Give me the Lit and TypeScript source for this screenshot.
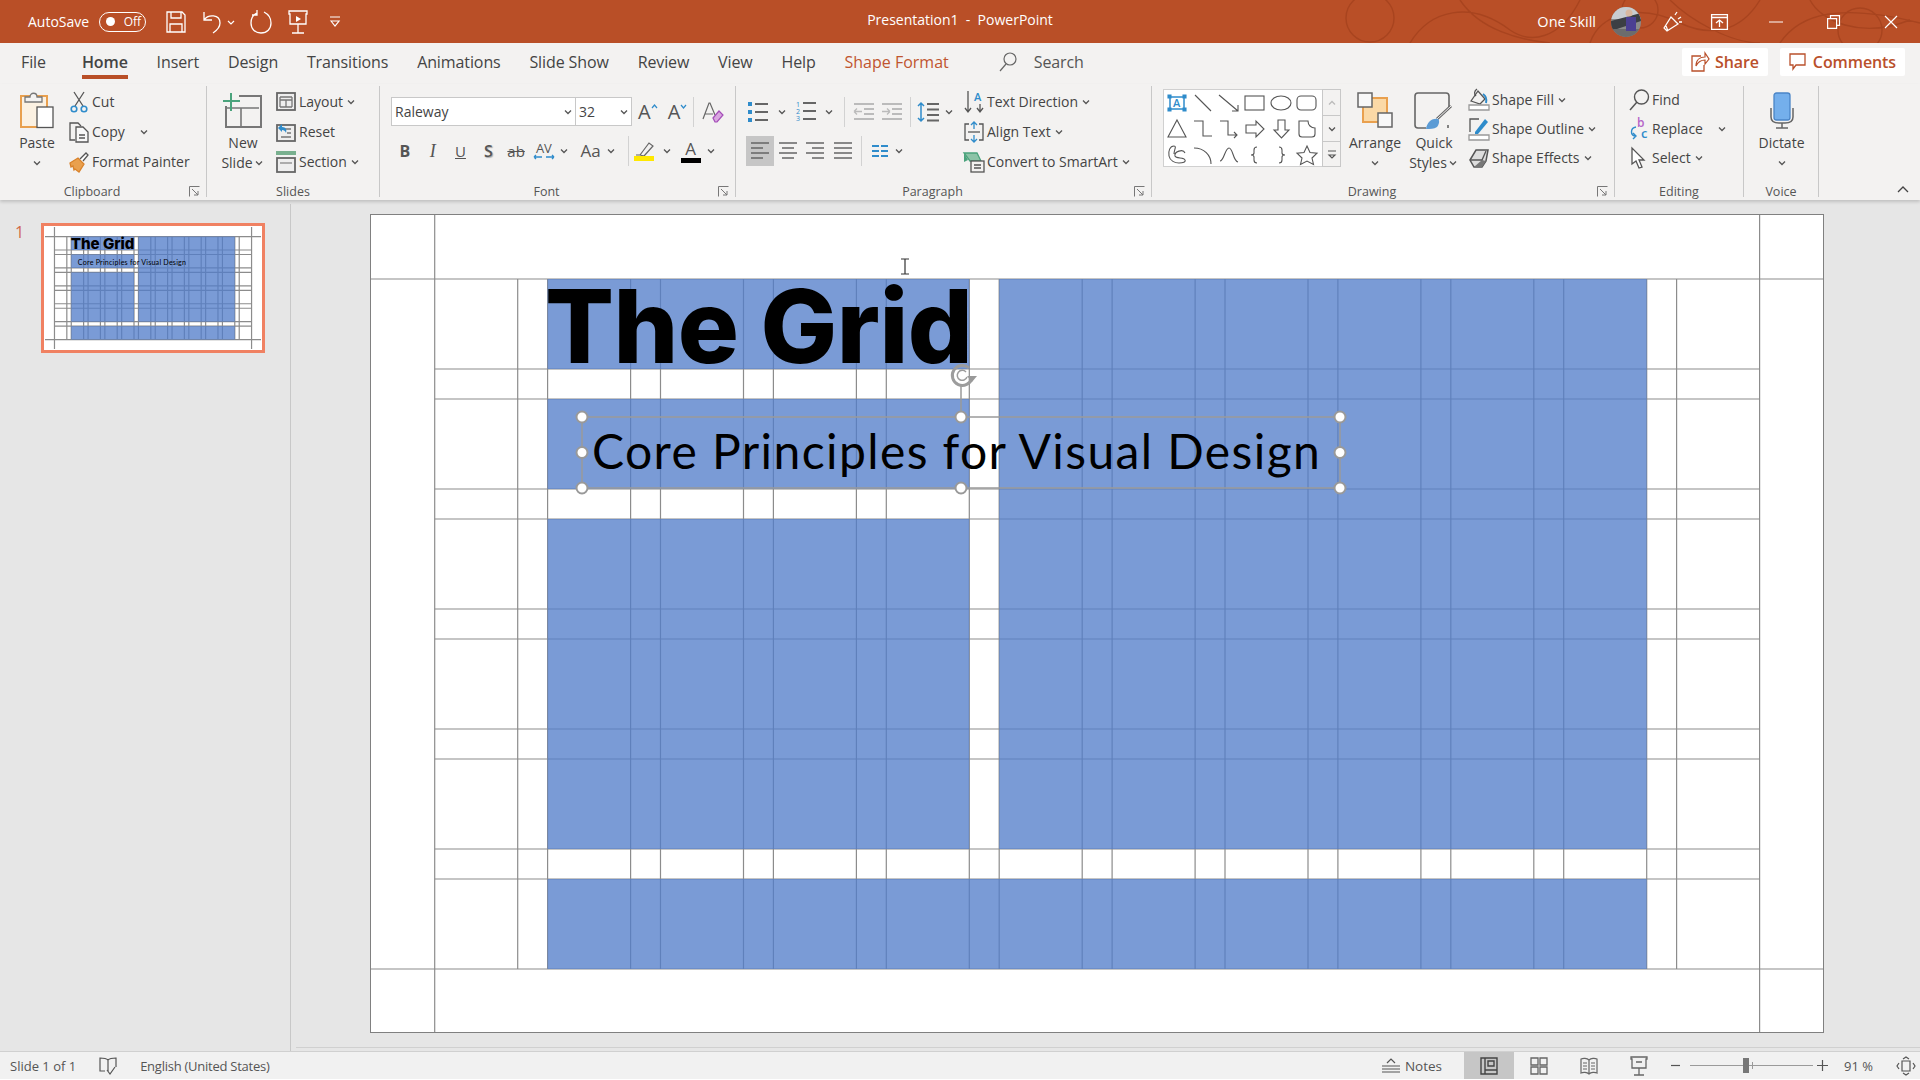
import { LitElement, css, html, svg } from 'lit';
import { customElement } from 'lit/decorators.js';

const BLUE = '#2f8ccb';
const ORANGE = '#e9a04e';
const GREEN = '#4aa37c';
const GREY = '#666';

const ic = (w: number, h: number, body: unknown) =>
  html`<svg class="ic" width=${w} height=${h} viewBox="0 0 ${w} ${h}" fill="none" stroke=${GREY} stroke-width="1.3">${body}</svg>`;

const chev = () =>
  html`<svg class="chev" width="12" height="12" viewBox="0 0 12 12" fill="none" stroke="#555" stroke-width="1.3"><path d="M3 4.5 6 7.5 9 4.5" /></svg>`;

const launcher = () =>
  html`<svg class="launcher" width="11" height="11" viewBox="0 0 11 11" fill="none" stroke="#777"><path d="M.5 10.5V.5H10.5M3 3l6 6M9 5v4H5" /></svg>`;

const icons = {
  paste: ic(34, 36, svg`
    <rect x="1" y="4" width="26" height="31" fill="#fbf1e2" stroke=${ORANGE} stroke-width="2" />
    <path d="M5 10V5h5c0-5 7-5 7 0h5v5z" fill="#f3f2f1" stroke="#777" />
    <rect x="17" y="15" width="16" height="20.5" fill="#fff" stroke="#555" />`),
  cut: ic(20, 22, svg`
    <path d="M5 1 14 15M15 1 6 15" stroke="#555" />
    <circle cx="5" cy="18" r="2.8" stroke=${BLUE} stroke-width="1.6" />
    <circle cx="15" cy="18" r="2.8" stroke=${BLUE} stroke-width="1.6" />`),
  copy: ic(20, 22, svg`
    <path d="M6 19H1V2h8l3 3" stroke="#555" />
    <path d="M7 6h7l5 5v10H7z" fill="#f8f8f8" stroke="#555" />
    <path d="M10 14h6M10 17h6" stroke="#555" />`),
  painter: ic(20, 22, svg`
    <path d="M1 12 9 7l6 6-5 8-4-3-1 1-1-4-2 1z" fill=${ORANGE} stroke="#d9822b" />
    <path d="M11 8l6-6 2 2-5 6" stroke="#555" fill="#fff" />`),
  newSlide: ic(40, 36, svg`
    <path d="M16 4h22v31H3V14" stroke="#777" stroke-width="2" />
    <path d="M3 16h33M18 16v18" stroke="#777" stroke-width="1.6" />
    <path d="M0 9h17M8 1v18" stroke=${GREEN} stroke-width="2" />`),
  layout: ic(20, 20, svg`
    <rect x="1" y="1" width="18" height="17" fill="#eee" stroke="#666" stroke-width="1.8" />
    <path d="M4 5h12M4 5v10M16 5v10M4 15h12M4 8h12M10 8v7" stroke="#777" />`),
  reset: ic(20, 20, svg`
    <rect x="1" y="3" width="18" height="16" fill="#eee" stroke="#666" stroke-width="1.8" />
    <path d="M9 7h6M11 11h4M5 15h10" stroke="#777" />
    <path d="M2 6l4-4v3c4 0 5 3 4 6-.5-2-2-3-4-3v2z" fill=${BLUE} stroke="none" />`),
  section: ic(20, 22, svg`
    <rect x="0" y="0" width="20" height="4" fill="#79b08f" stroke="none" />
    <rect x="1" y="7" width="18" height="14" fill="#eee" stroke="#666" stroke-width="1.8" />
    <path d="M4 12h12" stroke="#888" />`),
  spacing: html`<span class="av">AV<svg width="20" height="6" viewBox="0 0 20 6" fill="none" stroke=${BLUE} stroke-width="1.3"><path d="M0 3h8M0 3l2-2M0 3l2 2M12 3h8M20 3l-2-2M20 3l-2 2" /></svg></span>`,
  bullets: ic(22, 22, svg`
    <path d="M7 3h13M7 11h13M7 19h13" stroke-width="1.8" />
    <rect x="0" y="1" width="4" height="4" fill=${BLUE} stroke="none" />
    <rect x="0" y="9" width="4" height="4" fill=${BLUE} stroke="none" />
    <rect x="0" y="17" width="4" height="4" fill=${BLUE} stroke="none" />`),
  numbers: ic(22, 24, svg`
    <path d="M7 3h13M7 11h13M7 19h13" stroke-width="1.8" />
    <text x="0" y="7" class="nums">1</text><text x="0" y="14" class="nums">2</text><text x="0" y="21" class="nums">3</text>`),
  outdent: ic(22, 20, svg`
    <path d="M1 2h20M11 7h10M11 12h10M1 17h20" stroke="#bbb" stroke-width="1.8" />
    <path d="M9 9.5H1M1 9.5l3-3M1 9.5l3 3" stroke="#bbb" />`),
  indent: ic(22, 20, svg`
    <path d="M1 2h20M11 7h10M11 12h10M1 17h20" stroke="#bbb" stroke-width="1.8" />
    <path d="M1 9.5h8M9 9.5l-3-3M9 9.5l-3 3" stroke="#bbb" />`),
  lineSpacing: ic(22, 22, svg`
    <path d="M9 3h12M9 8.5h12M9 14h12M9 19.5h12" stroke-width="1.8" />
    <path d="M3 2v18M0 5l3-3 3 3M0 17l3 3 3-3" stroke=${BLUE} stroke-width="1.5" />`),
  alignLeft: ic(20, 20, svg`<path d="M1 2h18M1 7h12M1 12h18M1 17h12" stroke-width="1.6" />`),
  alignCenter: ic(20, 20, svg`<path d="M1 2h18M4 7h12M1 12h18M4 17h12" stroke-width="1.6" />`),
  alignRight: ic(20, 20, svg`<path d="M1 2h18M7 7h12M1 12h18M7 17h12" stroke-width="1.6" />`),
  justify: ic(20, 20, svg`<path d="M1 2h18M1 7h18M1 12h18M1 17h18" stroke-width="1.6" />`),
  columns: ic(16, 14, svg`<path d="M0 2h7M9 2h7M0 7h7M9 7h7M0 12h7M9 12h7" stroke=${BLUE} stroke-width="1.8" />`),
  textDir: ic(20, 24, svg`
    <path d="M4 1v21M1 18l3 4 3-4M16 14v8M13 18l3 4 3-4" stroke="#555" />
    <text x="10" y="11" class="blue-a">A</text>`),
  alignText: ic(20, 22, svg`
    <path d="M5 3H1v16h4M15 3h4v16h-4" stroke="#555" />
    <path d="M4 11h12" stroke="#555" />
    <path d="M10 1v7M7 4l3-3 3 3M10 21v-7M7 18l3 3 3-3" stroke=${BLUE} stroke-width="1.3" />`),
  smartArt: ic(22, 22, svg`
    <path d="M1 2h13l4 8H7z" fill="#8cc3a7" stroke=${GREEN} />
    <path d="M1 2l4 7-4 2z" fill=${GREEN} stroke="none" />
    <rect x="8" y="10" width="13" height="11" fill="#f3f2f1" stroke="#555" />
    <path d="M11 14h7M11 17h7" stroke="#555" />`),
  arrange: ic(36, 36, svg`
    <rect x="6" y="6" width="24" height="24" fill="#fbd9a6" stroke=${ORANGE} stroke-width="2" />
    <rect x="1" y="1" width="14" height="14" fill="#f8f8f8" stroke="#666" stroke-width="1.5" />
    <rect x="21" y="21" width="14" height="14" fill="#f8f8f8" stroke="#666" stroke-width="1.5" />`),
  quickStyles: ic(40, 38, svg`
    <path d="M12 36H4a3 3 0 0 1-3-3V4a3 3 0 0 1 3-3h28a3 3 0 0 1 3 3v13M34 33v3" stroke-width="1.6" />
    <path d="M23 27 37 14" stroke="#666" stroke-width="3" />
    <path d="M37 14 23 27" stroke="#f3f2f1" stroke-width="1" />
    <path d="M12 37c1-6 5-11 12-10 2 1 1 6-1 8-3 2-7 2-11 2z" fill="#5b9bd5" stroke="none" />`),
  fill: ic(20, 24, svg`
    <path d="M2 13 9 3l7 8-5 5z" stroke="#555" />
    <path d="M8 1c-3 2-3 5-1 7" stroke="#555" />
    <path d="M14 6c3 2 4 5 3 9" stroke=${BLUE} stroke-width="2" />
    <path d="M0 17h20v5H0z" stroke="#999" fill="#fff" />`),
  outline: ic(20, 24, svg`
    <path d="M1 15V2h9" stroke="#555" />
    <path d="M6 15 16 2l3 3L9 17H6z" fill=${BLUE} stroke="none" />
    <path d="M0 18h20v5H0z" stroke="#999" fill="#fff" />`),
  effects: ic(20, 22, svg`
    <path d="M1 13 7 3h12l-2 11-4 6H5z" fill="#ddd" stroke="#555" stroke-width="1.5" />
    <path d="M1 13h12l4-9M13 13v7" stroke="#555" stroke-width="1.3" />
    <path d="M13 13l4 1-4 6H5z" fill="#777" stroke="none" />`),
  find: ic(20, 22, svg`
    <circle cx="12.5" cy="8" r="7" stroke="#555" stroke-width="1.4" />
    <path d="M8 13 1 21" stroke="#555" stroke-width="1.5" />`),
  replace: ic(20, 24, svg`
    <text x="8" y="10" class="pink-b">b</text>
    <text x="12" y="21" class="blue-c">c</text>
    <path d="M7 10c-6 1-6 9 0 9M4 16l3 3-3 3" stroke=${BLUE} stroke-width="1.4" />`),
  select: ic(20, 22, svg`<path d="M3 1v16l4-3 3 7 3-1-3-7h5z" stroke="#555" stroke-width="1.3" fill="#fff" />`),
  dictate: ic(26, 38, svg`
    <rect x="5" y="1" width="16" height="27" rx="2.5" fill="#74afec" stroke="#4a85c7" />
    <path d="M2 16v9c0 5 4 6 8 6h6c4 0 8-1 8-6v-9" stroke="#666" stroke-width="1.5" />
    <path d="M13 31v5M7 36h12" stroke="#666" stroke-width="1.5" />`),
  share: ic(18, 20, svg`
    <path d="M10 4H1v15h12v-6" stroke="#b9502b" stroke-width="1.3" />
    <path d="M5 14c0-6 4-9 9-9V1l4 6-4 5V8c-4 0-7 2-9 6z" fill="#fff" stroke="#b9502b" stroke-width="1.2" />`),
  comment: ic(18, 18, svg`<path d="M1 1h15v11H7l-3 4v-4H1z" stroke="#b9502b" stroke-width="1.3" />`),
};

const shapes = [
  svg`<rect x="3" y="4" width="14" height="12" stroke=${BLUE} stroke-width="1.5" /><path d="M1 2h3v3H1zM16 2h3v3h-3zM1 15h3v3H1zM16 15h3v3h-3z" fill=${BLUE} stroke=${BLUE} /><text x="6" y="14" class="blue-a">A</text>`,
  svg`<path d="M2 2l16 16" />`,
  svg`<path d="M0 2l19 16M19 12v6h-6" />`,
  svg`<rect x="0" y="3" width="19" height="14" />`,
  svg`<ellipse cx="10" cy="10" rx="10" ry="7" />`,
  svg`<rect x="0" y="3" width="19" height="14" rx="4" />`,
  svg`<path d="M10 1l9 17H1z" />`,
  svg`<path d="M1 2h9v15h9" />`,
  svg`<path d="M1 2h8v14h9M15 13l3 3-3 3" />`,
  svg`<path d="M1 6h10V2l8 8-8 8v-4H1z" />`,
  svg`<path d="M7 1h7v10h4l-7.5 8L3 11h4z" />`,
  svg`<path d="M2 2h9c0 4 3 7 7 7v6q0 3-3 3H5q-3 0-3-3z" />`,
  svg`<path d="M7 9C7 5 10 1 7 1 3 1 1 6 2 11c1 5 6 7 10 7 4 0 7-1 6-3-1-3-9-1-10-4-1-4 8-8 10-3" />`,
  svg`<path d="M1 3c10 0 17 7 17 16" />`,
  svg`<path d="M1 16C5 16 6 3 10 3c4 0 4 13 9 14" />`,
  svg`<path d="M12 2q-3 0-3 3v3q0 2-3 2 3 0 3 2v3q0 3 3 3" />`,
  svg`<path d="M8 2q3 0 3 3v3q0 2 3 2-3 0-3 2v3q0 3-3 3" />`,
  svg`<path d="M10 1l3 6.5 7 .7-5 4.8 1.5 6.5L10 16l-6.5 3.5L5 13 0 8.2l7-.7z" />`,
];

// slide geometry: 12 columns and 6 rows, gutters between them
const SLIDE_W = 1452;
const SLIDE_H = 817;
const COL = 83;
const COL_GAP = 29.9;
const COL_X0 = 63.7;
const ROW = 90;
const ROW_GAP = 30;
const ROW_Y0 = 64;
const colL = (k: number) => COL_X0 + k * (COL + COL_GAP);
const colR = (k: number) => colL(k) + COL;
const rowT = (k: number) => ROW_Y0 + k * (ROW + ROW_GAP);
const rowB = (k: number) => rowT(k) + ROW;

const blocks = [
  [colL(1), rowT(0), colR(4), rowB(0)],
  [colL(1), rowT(1), colR(4), rowB(1)],
  [colL(1), rowT(2), colR(4), rowB(4)],
  [colL(5), rowT(0), colR(10), rowB(4)],
  [colL(1), rowT(5), colR(10), rowB(5)],
];

function slideArt() {
  const xs: number[] = [];
  const ys: number[] = [];
  for (let k = 0; k < 12; k++) xs.push(colL(k), colR(k));
  for (let k = 0; k < 6; k++) ys.push(rowT(k), rowB(k));
  const xEnd = colR(11);
  const yEnd = rowB(5);
  return svg`
    ${xs.map((x, i) =>
      i === 0 || i === xs.length - 1
        ? svg`<line x1=${x} x2=${x} y1="0" y2=${SLIDE_H} class="guide" />`
        : svg`<line x1=${x} x2=${x} y1=${ROW_Y0} y2=${yEnd} class="guide" />`,
    )}
    ${ys.map((y, i) =>
      i === 0 || i === ys.length - 1
        ? svg`<line x1="0" x2=${SLIDE_W} y1=${y} y2=${y} class="guide" />`
        : svg`<line x1=${COL_X0} x2=${xEnd} y1=${y} y2=${y} class="guide" />`,
    )}
    ${blocks.map(
      ([x1, y1, x2, y2]) =>
        svg`<rect x=${x1} y=${y1} width=${x2 - x1} height=${y2 - y1} class="block" />`,
    )}
    <text x="174" y="148" class="slide-title">The Grid</text>
    <text x="221" y="254" class="slide-sub">Core Principles for Visual Design</text>
  `;
}

function selection() {
  const xs = [211, 590, 969];
  const ys = [202, 237.5, 273];
  const pts = xs.flatMap((x, i) =>
    ys.filter((_, j) => !(i === 1 && j === 1)).map((y) => [x, y]),
  );
  return svg`
    <rect x="211" y="202" width="758" height="71" class="sel" />
    <path d="M590 170v32" class="sel" />
    ${pts.map(([x, y]) => svg`<circle cx=${x} cy=${y} r="5.5" class="handle" />`)}
    <path d="M598 153A10 10 0 1 0 601 163" class="rot" />
    <path d="M595 157A5 5 0 1 0 596 162" class="rot thin" />
    <path d="M596 161h10l-5 6z" fill="#999" />
    <path d="M534 44v15M530 44h8M530 59h8" class="beam" />
  `;
}

@customElement('app-root')
export class AppRoot extends LitElement {
  static styles = css`
    :host {
      display: block;
      width: 1920px;
      height: 1080px;
      overflow: hidden;
      background: #fff;
      color: #444;
      font: 14px/20px 'Open Sans', sans-serif;
    }

    svg {
      display: block;
      flex: none;
      overflow: visible;
    }

    .titlebar {
      position: relative;
      display: flex;
      align-items: center;
      height: 43px;
      background: #b94f27;
      color: #fff;
      overflow: hidden;
    }

    .pattern {
      position: absolute;
      top: 0;
      left: 1340px;
    }

    .qat {
      display: flex;
      align-items: center;
      padding-left: 28px;
      width: 760px;
      box-sizing: border-box;
    }

    .toggle {
      display: flex;
      align-items: center;
      justify-content: space-between;
      box-sizing: border-box;
      width: 47px;
      height: 20px;
      margin: 0 20px 0 10px;
      padding: 0 4px 0 6px;
      border: 1px solid #fff;
      border-radius: 10px;
      font-size: 12px;
    }

    .toggle i {
      width: 9px;
      height: 9px;
      border-radius: 50%;
      background: #fff;
    }

    .qat .undo { margin-left: 16px; }
    .qat .undo-chev { margin-left: 4px; }
    .qat .redo { margin-left: 14px; }
    .qat .present { margin-left: 16px; }
    .qat .more { margin-left: 21px; }

    .doc {
      width: 400px;
      text-align: center;
      white-space: pre;
      margin-top: -3px;
      font-size: 14px;
    }

    .win {
      position: relative;
      display: flex;
      align-items: center;
      margin-left: auto;
    }

    .win .user { margin-right: 15px; font-size: 14.5px; }
    .avatar { border-radius: 50%; margin-right: 21px; overflow: hidden; }
    .win .b1 { margin-right: 29px; }
    .win .b2 { margin-right: 41px; }
    .win .b3 { margin-right: 44px; }
    .win .b4 { margin-right: 44px; }
    .win .b5 { margin-right: 22px; }

    .tabs {
      display: flex;
      align-items: center;
      box-sizing: border-box;
      height: 41px;
      padding: 0 0 4px 21px;
      background: #f3f2f1;
      font-size: 16px;
      letter-spacing: -0.1px;
    }

    .tab {
      position: relative;
      margin-right: 28.8px;
      white-space: nowrap;
    }

    .tab.file { margin-right: 36px; }
    .tab.on { font-weight: 600; }

    .tab.on::after {
      content: '';
      position: absolute;
      left: 0;
      right: 0;
      bottom: -7px;
      height: 4px;
      background: #b94f27;
    }

    .tab.ctx {
      color: #c0552f;
      margin-right: 50px;
      letter-spacing: 0;
    }

    .search {
      display: flex;
      align-items: center;
      gap: 17px;
      color: #555;
    }

    .actions {
      display: flex;
      gap: 12px;
      margin-left: auto;
      margin-right: 15px;
    }

    .action {
      display: flex;
      align-items: center;
      gap: 6px;
      height: 28px;
      padding: 0 9px;
      background: #fff;
      color: #b9502b;
      font-weight: 600;
      font-size: 16px;
      border-radius: 2px;
    }

    .ribbon {
      position: relative;
      z-index: 1;
      display: flex;
      box-sizing: border-box;
      height: 116px;
      padding-top: 2px;
      background: #f3f2f1;
      box-shadow: 0 2px 3px rgba(0, 0, 0, 0.16);
    }

    .group {
      position: relative;
      box-sizing: border-box;
      height: 111px;
      border-right: 1px solid #c8c8c8;
      flex: none;
    }

    .body {
      display: flex;
      height: 98px;
      white-space: nowrap;
    }

    .label {
      height: 13px;
      line-height: 16px;
      font-size: 12.5px;
      text-align: center;
      color: #555;
    }

    .label.has-launcher { padding-right: 22px; }

    .launcher {
      position: absolute;
      right: 6px;
      bottom: 0;
    }

    .w-clip { width: 207px; }
    .w-slides { width: 173px; }
    .w-font { width: 356px; }
    .w-para { width: 416px; }
    .w-draw { width: 463px; }
    .w-edit { width: 129px; }
    .w-voice { width: 75px; }

    .big {
      display: flex;
      flex-direction: column;
      align-items: center;
      flex: none;
      box-sizing: border-box;
      padding-top: 6px;
      width: 66px;
    }

    .big .art {
      height: 41px;
      display: flex;
      align-items: flex-start;
      justify-content: center;
    }

    .big span {
      display: flex;
      align-items: center;
      height: 20px;
    }

    .paste { width: 69px; padding-left: 5px; }
    .slide-btn { margin-left: 3px; }
    .quick { width: 52px; }
    .voice { width: 75px; }

    .stack {
      display: flex;
      flex-direction: column;
      padding-top: 1px;
    }

    .stack.tight {
      padding-top: 0;
      margin-top: -1px;
    }

    .stack.pad { padding-left: 14px; }

    .row {
      display: flex;
      align-items: center;
      height: 30px;
    }

    .tight .row { height: 29px; }
    .row .chev { margin-left: 2px; }

    .row .box {
      display: flex;
      justify-content: center;
      width: 20px;
      margin-right: 3px;
    }

    .font-col { padding: 11px 0 0 11px; }

    .font-col.para-left {
      padding-left: 10px;
      width: 206px;
    }

    .combo {
      display: flex;
      align-items: center;
      justify-content: space-between;
      box-sizing: border-box;
      height: 29px;
      padding: 0 1px 0 3px;
      background: #fff;
      border: 1px solid #c8c8c8;
    }

    .combo.name { width: 185px; }
    .combo.size { width: 57px; margin-left: -1px; }

    .tool-row {
      display: flex;
      align-items: center;
      height: 29px;
    }

    .tool-row.second {
      height: 30px;
      margin-top: 10px;
    }

    .cell {
      display: flex;
      align-items: center;
      justify-content: center;
      width: 27.8px;
      height: 30px;
      flex: none;
    }

    .cell.w24 { width: 24px; }
    .cell.w20 { width: 20px; }
    .cell.on { background: #c6c6c6; }

    .vsep {
      width: 1px;
      height: 30px;
      background: #d2d2d2;
      flex: none;
    }

    .m1 { margin-left: 1px; }
    .m2 { margin-left: 2px; }
    .m3 { margin-left: 3px; }
    .m4 { margin-left: 4px; }
    .m5 { margin-left: 5px; }
    .m6 { margin-left: 6px; }
    .m7 { margin-left: 7px; }
    .m8 { margin-left: 8px; }
    .m9 { margin-left: 9px; }
    .m10 { margin-left: 10px; }
    .m11 { margin-left: 11px; }
    .m12 { margin-left: 12px; }

    .fx {
      font-family: 'Open Sans', sans-serif;
      font-size: 15px;
      color: #555;
    }

    .fx.b { font-weight: 700; font-size: 16px; }
    .fx.i { font: italic 18px 'Liberation Serif', serif; }
    .fx.u { text-decoration: underline; }
    .fx.s { font-size: 16px; font-weight: 600; text-shadow: 1px 1px 1px #aaa; }
    .fx.st { text-decoration: line-through; }

    .av {
      display: flex;
      flex-direction: column;
      align-items: center;
      font-size: 13px;
      line-height: 12px;
      color: #555;
    }

    .grow {
      display: flex;
      align-items: flex-start;
      font-size: 20px;
      line-height: 24px;
      color: #555;
    }

    .grow svg { margin-top: 4px; }

    .aa {
      font-size: 17px;
      color: #555;
    }

    .swatch {
      display: flex;
      flex-direction: column;
      align-items: center;
      font-size: 17px;
      line-height: 19px;
      color: #555;
    }

    .swatch i {
      display: block;
      width: 20px;
      height: 5px;
    }

    .swatch i.yellow { background: #ffe800; }
    .swatch i.black { background: #000; }

    .gallery {
      display: flex;
      margin: 3px 0 0 11px;
      height: 78px;
      flex: none;
    }

    .shapes {
      display: grid;
      grid-template-columns: repeat(6, 26px);
      grid-auto-rows: 26px;
      box-sizing: border-box;
      width: 159px;
      background: #fff;
      border: 1px solid #d0d0d0;
      border-right: 0;
    }

    .shapes span {
      display: flex;
      align-items: center;
      justify-content: center;
    }

    .scroller {
      display: grid;
      grid-template-rows: repeat(3, 26px);
      width: 19px;
      box-sizing: border-box;
      border: 1px solid #c8c8c8;
      background: #f3f2f1;
    }

    .scroller span {
      display: flex;
      align-items: center;
      justify-content: center;
      border-bottom: 1px solid #c8c8c8;
    }

    .scroller span:last-child { border-bottom: 0; }

    .collapse {
      position: absolute;
      right: 10px;
      bottom: 6px;
    }

    .main {
      display: flex;
      height: 851px;
      background: #e6e6e6;
    }

    .sidebar {
      display: flex;
      gap: 10px;
      box-sizing: border-box;
      width: 291px;
      margin-top: 4px;
      padding: 19px 0 0 15px;
      border-right: 1px solid #c8c8c8;
      color: #d2694a;
      font-size: 16px;
    }

    .number { margin-top: -1px; }

    .thumb {
      box-sizing: border-box;
      width: 224px;
      height: 130px;
      margin-left: 7px;
      border: 3px solid #f08162;
      background: #fff;
      padding: 1px;
    }

    .editor {
      flex: 1;
      box-sizing: border-box;
      height: 848px;
      margin-left: 5px;
      padding: 15px 0 0 75px;
      border-bottom: 1px solid #d0d0d0;
    }

    .slide {
      background: #fff;
      box-shadow: 0 0 0 1px #808080;
    }

    .guide {
      stroke: #8c8c8c;
      stroke-width: 1.2px;
      vector-effect: non-scaling-stroke;
    }

    .block {
      fill: #527dca;
      fill-opacity: 0.77;
    }

    .slide-title {
      font: 800 102px Inter, sans-serif;
      letter-spacing: -0.5px;
      fill: #000;
    }

    .slide-sub {
      font: 400 48px Lato, sans-serif;
      letter-spacing: 1.4px;
      fill: #000;
    }

    .sel {
      fill: none;
      stroke: #9a9a9a;
      stroke-width: 1.5px;
    }

    .handle {
      fill: #fff;
      stroke: #999;
      stroke-width: 2px;
    }

    .rot {
      fill: none;
      stroke: #9c9c9c;
      stroke-width: 3px;
    }

    .rot.thin { stroke-width: 1.5px; }

    .beam {
      fill: none;
      stroke: #333;
      stroke-width: 1.2px;
    }

    .nums {
      font: 7px 'Open Sans', sans-serif;
      fill: #2f8ccb;
      stroke: none;
    }

    .blue-a {
      font: 600 11px 'Open Sans', sans-serif;
      fill: #2f8ccb;
      stroke: none;
    }

    .pink-b {
      font: 600 12px 'Open Sans', sans-serif;
      fill: #b565c8;
      stroke: none;
    }

    .blue-c {
      font: 600 13px 'Open Sans', sans-serif;
      fill: #2f8ccb;
      stroke: none;
    }

    .status {
      display: flex;
      align-items: center;
      height: 27px;
      padding-left: 10px;
      background: #f1f1f1;
      border-top: 1px solid #d0d0d0;
      font-size: 13px;
      color: #555;
    }

    .status .proof { margin-left: 23px; }

    .status .lang {
      margin-left: 23px;
      letter-spacing: -0.25px;
    }

    .status .view {
      display: flex;
      align-items: center;
      justify-content: center;
      width: 50px;
      height: 27px;
      flex: none;
    }

    .status .view.on { background: #c6c6c6; }

    .status .notes {
      display: flex;
      align-items: center;
      gap: 4px;
      margin-left: auto;
      margin-right: 22px;
      font-size: 13.5px;
    }

    .status .minus { margin-left: 7px; }

    .slider {
      position: relative;
      width: 123px;
      height: 1px;
      margin: 0 4px 0 10px;
      background: #9a9a9a;
    }

    .slider i {
      position: absolute;
      left: 53px;
      top: -7px;
      width: 6px;
      height: 15px;
      background: #777;
    }

    .slider b {
      position: absolute;
      left: 62px;
      top: -3px;
      width: 1px;
      height: 7px;
      background: #999;
    }

    .zoomval {
      width: 52px;
      padding-left: 16px;
      box-sizing: border-box;
      white-space: nowrap;
    }

    .status .fit {
      margin: 0 4px 0 16px;
    }
  `;

  private small(icon: unknown, text: string, after: unknown = chev()) {
    return html`<div class="row"><span class="box">${icon}</span>${text}${after}</div>`;
  }

  render() {
    return html`
      ${this.titlebar()} ${this.tabs()}
      <div class="ribbon">
        ${this.clipboard()} ${this.slides()} ${this.font()} ${this.paragraph()} ${this.drawing()}
        ${this.editing()} ${this.voice()}
        <svg class="collapse" width="14" height="10" viewBox="0 0 14 10" fill="none" stroke="#444" stroke-width="1.3"><path d="M2 8l5-5 5 5" /></svg>
      </div>
      <div class="main">
        <aside class="sidebar">
          <span class="number">1</span>
          <div class="thumb">
            <svg width="216" height="122" viewBox="0 0 ${SLIDE_W} ${SLIDE_H}" preserveAspectRatio="none">${slideArt()}</svg>
          </div>
        </aside>
        <div class="editor">
          <svg class="slide" width=${SLIDE_W} height=${SLIDE_H} viewBox="0 0 ${SLIDE_W} ${SLIDE_H}">
            ${slideArt()} ${selection()}
          </svg>
        </div>
      </div>
      ${this.status()}
    `;
  }

  private titlebar() {
    return html`
      <header class="titlebar">
        <svg class="pattern" width="580" height="43" viewBox="0 0 580 43" fill="none" stroke="#a8441f" stroke-width="1.4">
          <circle cx="30" cy="18" r="24" />
          <path d="M70 43C90 10 130 0 170 30c20 14 50 10 70-30M120 0c20 30 60 40 90 43M250 43c10-30 50-40 90-20 30 14 60 10 80-23M330 0c20 20 60 43 90 43M440 43c20-30 60-40 140-20M470 0c10 20 50 40 100 20" />
          <circle cx="300" cy="10" r="18" />
          <circle cx="520" cy="30" r="22" />
        </svg>
        <div class="qat">
          <span>AutoSave</span>
          <span class="toggle"><i></i>Off</span>
          <svg width="20" height="22" viewBox="0 0 20 22" fill="none" stroke="#fff" stroke-width="1.3"><path d="M1 1h15l3 3v17H1zM5 1v6h10V1M4 21v-8h12v8" /></svg>
          <svg class="undo" width="20" height="24" viewBox="0 0 20 24" fill="none" stroke="#fff" stroke-width="1.3"><path d="M2 2v8h8M2 10c4-6 16-6 16 3 0 5-4 8-7 10" /></svg>
          <svg class="undo-chev" width="10" height="10" viewBox="0 0 10 10" fill="none" stroke="#fff" stroke-width="1.2"><path d="M2 4l3 3 3-3" /></svg>
          <svg class="redo" width="22" height="24" viewBox="0 0 22 24" fill="none" stroke="#fff" stroke-width="1.3"><path d="M7 3C3 5 1 9 1 13c0 6 4 10 10 10s10-4 10-10c0-5-3-9-7-11M7 0v5H2" /></svg>
          <svg class="present" width="20" height="24" viewBox="0 0 20 24" fill="none" stroke="#fff" stroke-width="1.3"><path d="M1 1h18v3h-1v10H2V4H1zM10 14v9M4 23h12" /><path d="M8 6l5 3-5 3z" fill="#fff" stroke="none" /></svg>
          <svg class="more" width="12" height="12" viewBox="0 0 12 12" fill="none" stroke="#fff" stroke-width="1.2"><path d="M1 1h10M2 5l4 5 4-5z" /></svg>
        </div>
        <div class="doc">Presentation1  -  PowerPoint</div>
        <div class="win">
          <span class="user">One Skill</span>
          <svg class="avatar" width="30" height="30" viewBox="0 0 30 30">
            <rect width="30" height="30" fill="#8b8b8b" />
            <rect width="30" height="12" fill="#c9cdd1" />
            <path d="M0 14 30 6v8L0 24z" fill="#3c3f44" />
            <rect y="22" width="30" height="8" fill="#6c6c6c" />
            <rect x="15" y="10" width="10" height="14" fill="#4b3f93" />
            <circle cx="18" cy="6" r="3.5" fill="#d8b8a0" />
          </svg>
          <svg class="b1" width="20" height="24" viewBox="0 0 20 24" fill="none" stroke="#fff" stroke-width="1.3"><path d="M2 18 9 7l7 7-11 7zM4 16l2 5M13 5l2-3M16 9l3-2M17 12h3" /></svg>
          <svg class="b2" width="17" height="16" viewBox="0 0 17 16" fill="none" stroke="#fff" stroke-width="1.3"><path d="M.6.6h15.8v14.8H.6zM.6 3.5h15.8" /><path d="M8.5 13V6M5 9l3.5-3L12 9" /></svg>
          <svg class="b3" width="14" height="2" viewBox="0 0 14 2" stroke="#fff"><path d="M0 1h14" /></svg>
          <svg class="b4" width="13" height="14" viewBox="0 0 13 14" fill="none" stroke="#fff" stroke-width="1.2"><path d="M.6 3.6h9v9.8h-9zM3.5 3.5V.6h9v9.8H9.5" /></svg>
          <svg class="b5" width="14" height="14" viewBox="0 0 14 14" stroke="#fff" stroke-width="1.2"><path d="M1 1l12 12M13 1 1 13" /></svg>
        </div>
      </header>
    `;
  }

  private tabs() {
    const names = ['Insert', 'Design', 'Transitions', 'Animations', 'Slide Show', 'Review', 'View', 'Help'];
    return html`
      <nav class="tabs">
        <span class="tab file">File</span>
        <span class="tab on">Home</span>
        ${names.map((n) => html`<span class="tab">${n}</span>`)}
        <span class="tab ctx">Shape Format</span>
        <span class="search">
          <svg width="18" height="20" viewBox="0 0 18 20" fill="none" stroke="#666" stroke-width="1.2"><circle cx="11" cy="7" r="6" /><path d="M7 12 1 19" /></svg>
          Search
        </span>
        <div class="actions">
          <span class="action">${icons.share} Share</span>
          <span class="action">${icons.comment} Comments</span>
        </div>
      </nav>
    `;
  }

  private clipboard() {
    return html`
      <section class="group w-clip">
        <div class="body">
          <div class="big paste">
            <div class="art">${icons.paste}</div>
            <span>Paste</span>
            <span>${chev()}</span>
          </div>
          <div class="stack">
            ${this.small(icons.cut, 'Cut', '')}
            ${this.small(icons.copy, 'Copy', html`<span class="m11">${chev()}</span>`)}
            ${this.small(icons.painter, 'Format Painter', '')}
          </div>
        </div>
        <div class="label has-launcher">Clipboard</div>
        ${launcher()}
      </section>
    `;
  }

  private slides() {
    return html`
      <section class="group w-slides">
        <div class="body">
          <div class="big slide-btn">
            <div class="art">${icons.newSlide}</div>
            <span>New</span>
            <span>Slide${chev()}</span>
          </div>
          <div class="stack">
            ${this.small(icons.layout, 'Layout')}
            ${this.small(icons.reset, 'Reset', '')}
            ${this.small(icons.section, 'Section')}
          </div>
        </div>
        <div class="label">Slides</div>
      </section>
    `;
  }

  private font() {
    return html`
      <section class="group w-font">
        <div class="body">
          <div class="font-col">
            <div class="tool-row">
              <div class="combo name">Raleway${chev()}</div>
              <div class="combo size">32${chev()}</div>
              <span class="grow m6">A<svg width="7" height="5" viewBox="0 0 7 5" fill="none" stroke=${BLUE} stroke-width="1.2"><path d="M1 4l2.5-3L6 4" /></svg></span>
              <span class="grow m10">A<svg width="7" height="5" viewBox="0 0 7 5" fill="none" stroke=${BLUE} stroke-width="1.2"><path d="M1 1l2.5 3L6 1" /></svg></span>
              <span class="vsep m6"></span>
              <svg class="m8" width="22" height="24" viewBox="0 0 22 24" fill="none" stroke="#666" stroke-width="1.2"><path d="M1 19 7 3h1l5 12M3 14h8" /><path d="M11 18l6-7 4 4-6 7h-2z" fill="#d9a6e0" stroke="#a44db8" /></svg>
            </div>
            <div class="tool-row second">
              <span class="cell"><span class="fx b">B</span></span>
              <span class="cell"><span class="fx i">I</span></span>
              <span class="cell"><span class="fx u">U</span></span>
              <span class="cell"><span class="fx s">S</span></span>
              <span class="cell"><span class="fx st">ab</span></span>
              <span class="cell">${icons.spacing}</span>
              ${chev()}
              <span class="cell m7 aa">Aa</span>
              <span>${chev()}</span>
              <span class="vsep m11"></span>
              <span class="swatch m5"><svg width="20" height="15" viewBox="0 0 20 15" fill="none" stroke="#666" stroke-width="1.2"><path d="M6 14 15 2l4 3-9 10zM2 14h5" /></svg><i class="yellow"></i></span>
              <span class="m7">${chev()}</span>
              <span class="swatch m8">A<i class="black"></i></span>
              <span class="m4">${chev()}</span>
            </div>
          </div>
        </div>
        <div class="label has-launcher">Font</div>
        ${launcher()}
      </section>
    `;
  }

  private paragraph() {
    return html`
      <section class="group w-para">
        <div class="body">
          <div class="font-col para-left">
            <div class="tool-row">
              <span class="cell w24 m1">${icons.bullets}</span>
              <span class="m5">${chev()}</span>
              <span class="cell w24 m7">${icons.numbers}</span>
              <span class="m4">${chev()}</span>
              <span class="vsep m9"></span>
              <span class="cell w24 m7">${icons.outdent}</span>
              <span class="cell w24 m4">${icons.indent}</span>
              <span class="vsep m6"></span>
              <span class="cell w24 m6">${icons.lineSpacing}</span>
              <span class="m2">${chev()}</span>
            </div>
            <div class="tool-row second">
              <span class="cell on">${icons.alignLeft}</span>
              <span class="cell">${icons.alignCenter}</span>
              <span class="cell">${icons.alignRight}</span>
              <span class="cell">${icons.justify}</span>
              <span class="vsep m4"></span>
              <span class="cell w20 m8">${icons.columns}</span>
              <span class="m3">${chev()}</span>
            </div>
          </div>
          <div class="stack m12">
            ${this.small(icons.textDir, 'Text Direction')}
            ${this.small(icons.alignText, 'Align Text')}
            ${this.small(icons.smartArt, 'Convert to SmartArt')}
          </div>
        </div>
        <div class="label has-launcher">Paragraph</div>
        ${launcher()}
      </section>
    `;
  }

  private drawing() {
    return html`
      <section class="group w-draw">
        <div class="body">
          <div class="gallery">
            <div class="shapes">
              ${shapes.map(
                (s) => html`<span><svg width="20" height="20" viewBox="0 0 20 20" fill="none" stroke="#555" stroke-width="1.1">${s}</svg></span>`,
              )}
            </div>
            <div class="scroller">
              <span><svg width="12" height="12" viewBox="0 0 12 12" fill="none" stroke="#bbb" stroke-width="1.3"><path d="M3 7.5 6 4.5 9 7.5" /></svg></span>
              <span>${chev()}</span>
              <span><svg width="12" height="12" viewBox="0 0 12 12" fill="none" stroke="#555" stroke-width="1.2"><path d="M2 2h8M3 6l3 3 3-3z" /></svg></span>
            </div>
          </div>
          <div class="big m1">
            <div class="art">${icons.arrange}</div>
            <span>Arrange</span>
            <span>${chev()}</span>
          </div>
          <div class="big quick">
            <div class="art">${icons.quickStyles}</div>
            <span>Quick</span>
            <span>Styles${chev()}</span>
          </div>
          <div class="stack tight m9">
            ${this.small(icons.fill, 'Shape Fill')}
            ${this.small(icons.outline, 'Shape Outline')}
            ${this.small(icons.effects, 'Shape Effects')}
          </div>
        </div>
        <div class="label has-launcher">Drawing</div>
        ${launcher()}
      </section>
    `;
  }

  private editing() {
    return html`
      <section class="group w-edit">
        <div class="body">
          <div class="stack tight pad">
            ${this.small(icons.find, 'Find', '')}
            ${this.small(icons.replace, 'Replace', html`<span class="m11">${chev()}</span>`)}
            ${this.small(icons.select, 'Select')}
          </div>
        </div>
        <div class="label">Editing</div>
      </section>
    `;
  }

  private voice() {
    return html`
      <section class="group w-voice">
        <div class="body">
          <div class="big voice">
            <div class="art">${icons.dictate}</div>
            <span>Dictate</span>
            <span>${chev()}</span>
          </div>
        </div>
        <div class="label">Voice</div>
      </section>
    `;
  }

  private status() {
    return html`
      <footer class="status">
        <span>Slide 1 of 1</span>
        <svg class="proof" width="18" height="18" viewBox="0 0 18 18" fill="none" stroke="#555" stroke-width="1.2"><path d="M9 3C7 1 4 1 1 1v13h5M9 3c2-2 5-2 8-2v9M9 3v11" /><path d="M8 13l3 4 5-7" /></svg>
        <span class="lang">English (United States)</span>
        <span class="notes">
          <svg width="20" height="16" viewBox="0 0 20 16" fill="none" stroke="#555" stroke-width="1.2"><path d="M6 5l4-4 4 4M1 8h18M1 11h18M1 14h18" /></svg>
          Notes
        </span>
        <span class="view on"><svg width="18" height="18" viewBox="0 0 18 18" fill="none" stroke="#444" stroke-width="1.4"><path d="M1 1h16v16H1zM5 1v16M5 13h12M8 4h6v5H8z" /></svg></span>
        <span class="view"><svg width="18" height="18" viewBox="0 0 18 18" fill="none" stroke="#666" stroke-width="1.3"><path d="M1 1h7v7H1zM10 1h7v7h-7zM1 10h7v7H1zM10 10h7v7h-7z" /></svg></span>
        <span class="view"><svg width="18" height="18" viewBox="0 0 18 18" fill="none" stroke="#666" stroke-width="1.2"><path d="M9 3C7 1 3 1 1 2v14c2-1 6-1 8 1 2-2 6-2 8-1V2c-2-1-6-1-8 1zM9 3v14M3 6h4M3 9h4M3 12h4M11 6h4M11 9h4M11 12h4" /></svg></span>
        <span class="view"><svg width="18" height="20" viewBox="0 0 18 20" fill="none" stroke="#666" stroke-width="1.3"><path d="M1 1h16v2h-1v9H2V3H1zM9 12v7M4 19h10M6 6h6" /></svg></span>
        <svg class="minus" width="9" height="9" viewBox="0 0 9 9" stroke="#555" stroke-width="1.2"><path d="M0 4.5h9" /></svg>
        <span class="slider"><i></i><b></b></span>
        <svg width="11" height="11" viewBox="0 0 11 11" stroke="#555" stroke-width="1.2"><path d="M0 5.5h11M5.5 0v11" /></svg>
        <span class="zoomval">91 %</span>
        <svg class="fit" width="20" height="20" viewBox="0 0 20 20" fill="none" stroke="#555" stroke-width="1.2"><path d="M6 5h8v10H6zM3 7l-2 3 2 3M17 7l2 3-2 3M7 3l3-2 3 2M7 17l3 2 3-2" /></svg>
      </footer>
    `;
  }
}
